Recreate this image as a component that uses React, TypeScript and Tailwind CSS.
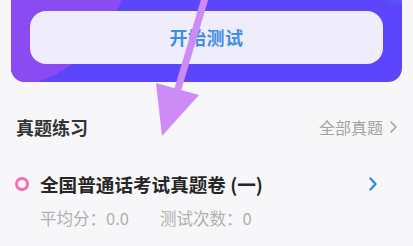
import React from "react";

export default function App() {
  const cjk = { fontFamily: '"Noto Sans CJK SC", "Noto Sans", sans-serif' };
  return (
    <div className="relative w-full h-[246px] overflow-hidden bg-[#f7f7f9]" style={cjk}>
      {/* card */}
      <div className="relative mx-[11px] -mt-[20px] pt-[31px] pb-[18px] rounded-[14px] overflow-hidden bg-[#5c45fb]">
        <div className="absolute -left-[160px] -top-[170px] w-[280px] h-[280px] rounded-full bg-[#8a4bf3]" />
        <div className="absolute -right-[30px] -top-[40px] w-[60px] h-[60px] rounded-full bg-[#4d80f6] blur-[4px]" />
        <div className="relative mx-[19px] h-[53px] rounded-[16px] bg-[#efecfb] flex items-center justify-center">
          <span className="text-[18px] font-bold text-[#3f8ee8] tracking-[0.5px]">开始测试</span>
        </div>
      </div>

      {/* section header */}
      <div className="mt-[33px] px-[16px] h-[24px] flex items-center justify-between">
        <span className="text-[18px] font-bold text-[#333333] leading-none">真题练习</span>
        <span className="flex items-center gap-[7px] text-[16px] text-[#a3a3a3] leading-none">
          全部真题
          <svg width="7" height="12" viewBox="0 0 7 12">
            <path d="M1 1 L6 6 L1 11" fill="none" stroke="#a3a3a3" strokeWidth="1.6" strokeLinecap="round" strokeLinejoin="round" />
          </svg>
        </span>
      </div>

      {/* item */}
      <div className="mt-[32px] pl-[15px] pr-[36px] h-[26px] flex items-center">
        <span className="w-[14px] h-[14px] rounded-full border-[3px] border-[#f46bb8] shrink-0" />
        <span className="ml-[11px] text-[18.6px] font-bold text-[#262626] leading-none">全国普通话考试真题卷 (一)</span>
        <svg className="ml-auto" width="8" height="14" viewBox="0 0 8 14">
          <path d="M1.5 1.5 L6.5 7 L1.5 12.5" fill="none" stroke="#3a86f0" strokeWidth="2.4" strokeLinecap="round" strokeLinejoin="round" />
        </svg>
      </div>
      <div className="mt-[10px] pl-[40px] h-[22px] flex items-center text-[16.5px] text-[#b0b0b0] leading-none">
        <span>平均分：0.0</span>
        <span className="ml-[31px]">测试次数：0</span>
      </div>

      {/* annotation arrow */}
      <svg className="absolute left-0 top-0 pointer-events-none" width="413" height="246" viewBox="0 0 413 246">
        <line x1="206" y1="-5" x2="177" y2="92" stroke="#cd8bf6" strokeWidth="7" />
        <polygon points="156,83 199,95 162,136" fill="#cd8bf6" />
      </svg>
    </div>
  );
}
